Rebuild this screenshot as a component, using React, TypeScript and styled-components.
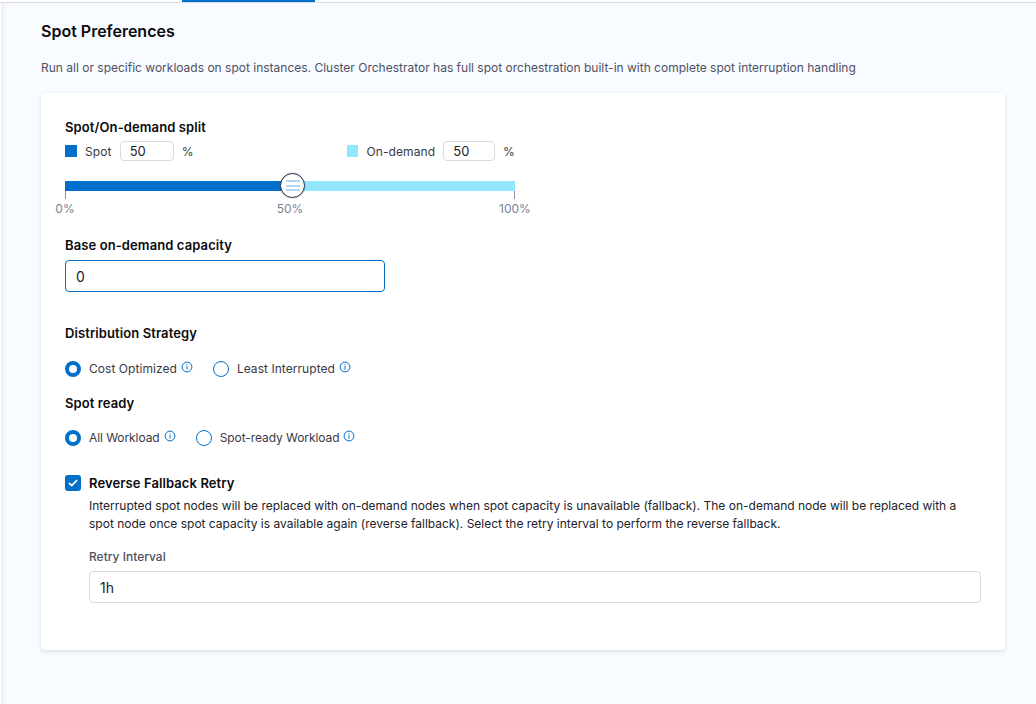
import React from 'react';
import styled, { createGlobalStyle } from 'styled-components';

const GlobalStyle = createGlobalStyle`
  html, body {
    margin: 0;
    padding: 0;
    height: 100%;
    overflow: hidden;
  }
  body {
    font-family: Inter, "Noto Sans", sans-serif;
    background: #f8fbff;
    color: #0b0b0d;
  }
  * {
    box-sizing: border-box;
  }
`;

const Page = styled.div`
  width: 1036px;
  height: 704px;
  background: #f8fbff;
  box-shadow: inset 1px 0 0 #fff, inset 7px 0 6px -4px #e8eaf3;
`;

const TabBar = styled.div`
  height: 3px;
  padding-left: 182px;
  background: #fff;
  border-bottom: 1px solid #d9dae5;
`;

const ActiveTab = styled.div`
  width: 133px;
  height: 2px;
  background: #0170cb;
`;

const Content = styled.div`
  padding: 18px 31px 0 41px;
`;

const Title = styled.h2`
  margin: 0;
  font-size: 16px;
  line-height: 20px;
  font-weight: 600;
  color: #0b0b0d;
`;

const Description = styled.p`
  margin: 18px 0 0;
  font-size: 12px;
  line-height: 18px;
  color: #4f5162;
`;

const Card = styled.section`
  margin-top: 16px;
  height: 557px;
  padding: 26px 24px 0;
  background: #fff;
  border-radius: 4px;
  box-shadow: 0 0 1px rgba(40, 41, 61, 0.04), 0 2px 4px rgba(96, 97, 112, 0.16);
`;

const SectionLabel = styled.div<{ $top?: number }>`
  margin-top: ${(p) => p.$top ?? 0}px;
  font-size: 13px;
  line-height: 16px;
  font-weight: 600;
  letter-spacing: 0.1px;
  color: #0b0b0d;
`;

const SplitRow = styled.div`
  display: flex;
  align-items: center;
  width: 450px;
  height: 20px;
  margin-top: 6px;
  font-size: 12px;
  letter-spacing: 0.12px;
  color: #383946;
  white-space: nowrap;
`;

const SplitGroup = styled.div<{ $width: number }>`
  display: flex;
  align-items: center;
  width: ${(p) => p.$width}px;
`;

const Swatch = styled.span<{ $color: string }>`
  width: 12px;
  height: 12px;
  margin-right: 8px;
  background: ${(p) => p.$color};
`;

const SplitInput = styled.div`
  width: 54px;
  height: 20px;
  margin: 0 8px;
  padding-left: 9px;
  border: 1px solid #d9dae5;
  border-radius: 4px;
  font-size: 13px;
  line-height: 18px;
  letter-spacing: 0;
  color: #22222a;
`;

const Slider = styled.div`
  position: relative;
  display: flex;
  width: 450px;
  height: 10px;
  margin-top: 20px;
`;

const SliderPart = styled.div<{ $color: string; $width: number }>`
  width: ${(p) => p.$width}px;
  background: ${(p) => p.$color};
`;

const Thumb = styled.div`
  position: absolute;
  left: 215px;
  top: -8px;
  display: flex;
  flex-direction: column;
  justify-content: center;
  align-items: center;
  gap: 2.4px;
  width: 25px;
  height: 25px;
  border: 1px solid #22304a;
  border-radius: 50%;
  background: #fff;
  box-shadow: 0 0 2px rgba(40, 41, 61, 0.3);

  span {
    width: 14px;
    height: 2px;
    background: #b4d5f3;
  }
`;

const Tick = styled.span<{ $side: 'left' | 'right' }>`
  position: absolute;
  top: 10px;
  ${(p) => p.$side}: 0;
  width: 1px;
  height: 8px;
  background: #8d8fa3;
`;

const ScaleLabels = styled.div`
  display: flex;
  justify-content: space-between;
  width: 450px;
  margin-top: 9px;
  font-size: 12px;
  line-height: 18px;
  color: #7d7f96;
`;

const ScaleLabel = styled.span`
  display: flex;
  justify-content: center;
  width: 0;
  white-space: nowrap;
`;

const TextBox = styled.div<{ $focused?: boolean; $width: string; $top?: number }>`
  display: flex;
  align-items: center;
  width: ${(p) => p.$width};
  height: 32px;
  margin-top: ${(p) => p.$top ?? 0}px;
  padding-left: 10px;
  border: 1px solid ${(p) => (p.$focused ? '#0170cb' : '#d9dae5')};
  border-radius: 4px;
  font-size: 14px;
  color: #22222a;
`;

const OptionRow = styled.div<{ $top: number; $spacing: number }>`
  display: flex;
  align-items: center;
  gap: 20px;
  height: 18px;
  margin-top: ${(p) => p.$top}px;
  letter-spacing: ${(p) => p.$spacing}px;
`;

const Option = styled.label`
  display: flex;
  align-items: center;
  font-size: 12px;
  line-height: 16px;
  color: #383946;
`;

const Radio = styled.span<{ $checked?: boolean }>`
  width: 16px;
  height: 16px;
  margin-right: 8px;
  border-radius: 50%;
  border: ${(p) => (p.$checked ? '4.5px solid #0170cb' : '1px solid #0170cb')};
  background: #fff;
`;

const InfoMark = styled.svg`
  width: 12px;
  height: 12px;
  margin: -5px 0 0 4px;
  color: #0170cb;
`;

const CheckRow = styled.div`
  display: flex;
  align-items: center;
  height: 16px;
  margin-top: 28px;
`;

const CheckBox = styled.span`
  display: flex;
  align-items: center;
  justify-content: center;
  width: 16px;
  height: 16px;
  margin-right: 8px;
  border-radius: 3px;
  background: #0170cb;
`;

const Indented = styled.div`
  padding-left: 24px;
`;

const HelpText = styled.p`
  margin: 6px 0 0;
  font-size: 12px;
  line-height: 18px;
  color: #22222a;
`;

const FieldLabel = styled.div`
  margin: 16px 0 6px;
  font-size: 12px;
  line-height: 16px;
  font-weight: 500;
  color: #4f5162;
`;

const Info = () => (
  <InfoMark viewBox="0 0 12 12" fill="none">
    <circle cx="6" cy="6" r="4.9" stroke="currentColor" strokeWidth="1" />
    <rect x="5.5" y="5" width="1" height="3.6" fill="currentColor" />
    <rect x="5.5" y="3.2" width="1" height="1" fill="currentColor" />
  </InfoMark>
);

export default function App() {
  return (
    <Page>
      <GlobalStyle />
      <TabBar>
        <ActiveTab />
      </TabBar>
      <Content>
        <Title>Spot Preferences</Title>
        <Description>
          Run all or specific workloads on spot instances. Cluster Orchestrator has full spot
          orchestration built-in with complete spot interruption handling
        </Description>
        <Card>
          <SectionLabel>Spot/On-demand split</SectionLabel>
          <SplitRow>
            <SplitGroup $width={282}>
              <Swatch $color="#0170cb" />
              Spot
              <SplitInput>50</SplitInput>
              %
            </SplitGroup>
            <SplitGroup $width={168}>
              <Swatch $color="#92e6fd" />
              On-demand
              <SplitInput>50</SplitInput>
              %
            </SplitGroup>
          </SplitRow>
          <Slider>
            <SliderPart $color="#0170cb" $width={225} />
            <SliderPart $color="#92e6fd" $width={225} />
            <Thumb>
              <span />
              <span />
              <span />
            </Thumb>
            <Tick $side="left" />
            <Tick $side="right" />
          </Slider>
          <ScaleLabels>
            <ScaleLabel>0%</ScaleLabel>
            <ScaleLabel>50%</ScaleLabel>
            <ScaleLabel>100%</ScaleLabel>
          </ScaleLabels>
          <SectionLabel $top={19}>Base on-demand capacity</SectionLabel>
          <TextBox $focused $width="320px" $top={7}>
            0
          </TextBox>

          <SectionLabel $top={33}>Distribution Strategy</SectionLabel>
          <OptionRow $top={19} $spacing={0.05}>
            <Option>
              <Radio $checked />
              Cost Optimized
              <Info />
            </Option>
            <Option>
              <Radio />
              Least Interrupted
              <Info />
            </Option>
          </OptionRow>
          <SectionLabel $top={17}>Spot ready</SectionLabel>
          <OptionRow $top={18} $spacing={-0.07}>
            <Option>
              <Radio $checked />
              All Workload
              <Info />
            </Option>
            <Option>
              <Radio />
              Spot-ready Workload
              <Info />
            </Option>
          </OptionRow>

          <CheckRow>
            <CheckBox>
              <svg width="10" height="8" viewBox="0 0 10 8" fill="none">
                <path d="M1 4l2.8 2.6L9 1.2" stroke="#fff" strokeWidth="1.8" />
              </svg>
            </CheckBox>
            <SectionLabel>Reverse Fallback Retry</SectionLabel>
          </CheckRow>
          <Indented>
            <HelpText>
              Interrupted spot nodes will be replaced with on-demand nodes when spot capacity is
              unavailable (fallback). The on-demand node will be replaced with a spot node once spot
              capacity is available again (reverse fallback). Select the retry interval to perform
              the reverse fallback.
            </HelpText>
            <FieldLabel>Retry Interval</FieldLabel>
            <TextBox $width="892px">1h</TextBox>
          </Indented>
        </Card>
      </Content>
    </Page>
  );
}
